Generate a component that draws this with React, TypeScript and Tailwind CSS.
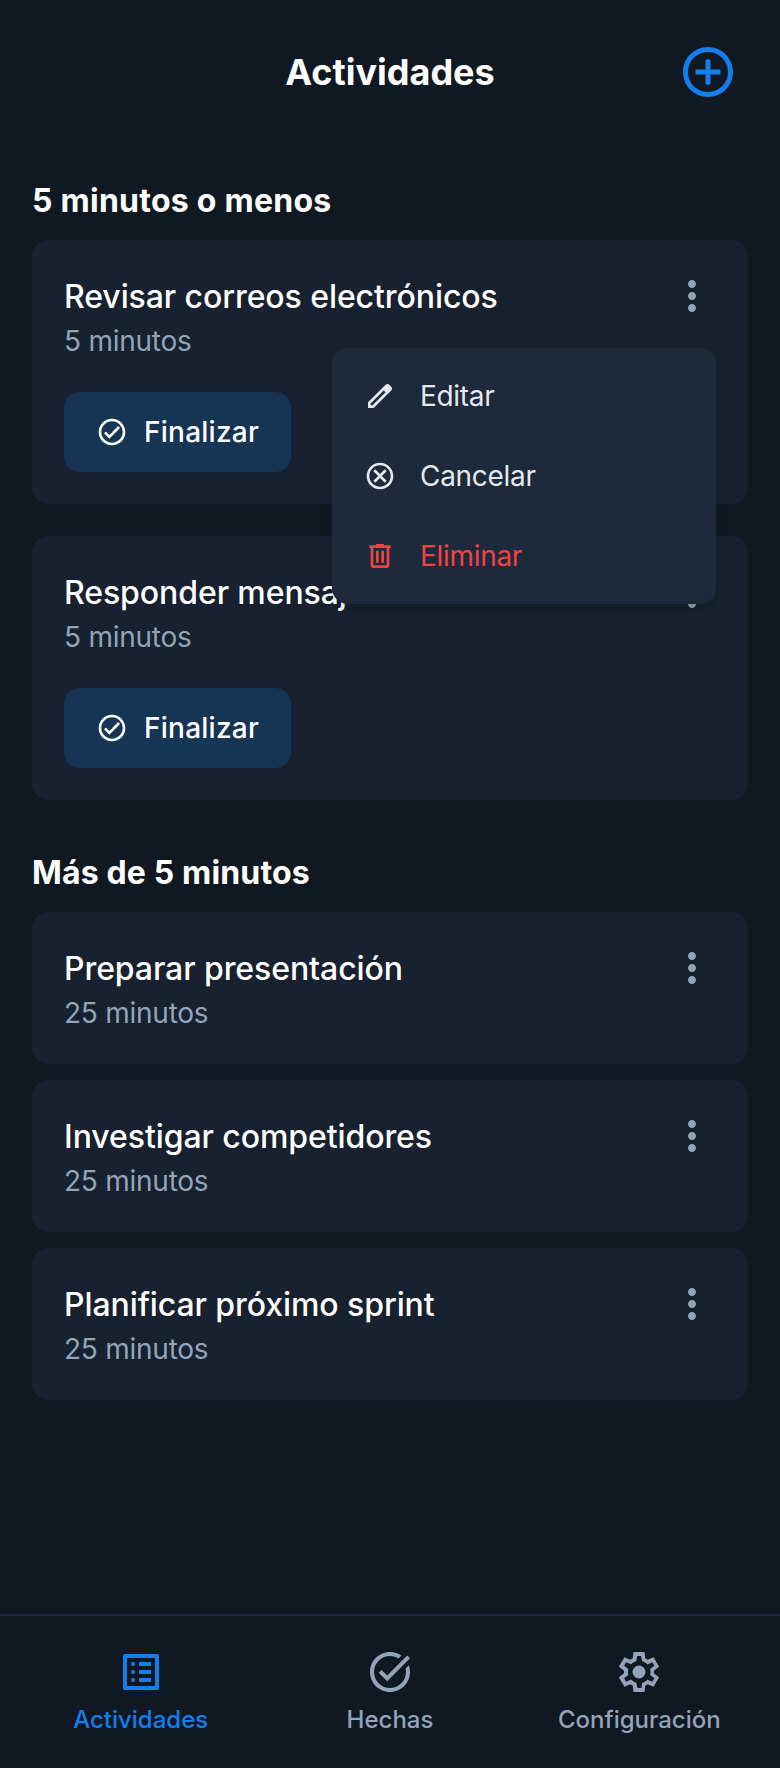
import React from "react";

const P = {
  add: "M13 7h-2v4H7v2h4v4h2v-4h4v-2h-4V7zm-1-5C6.48 2 2 6.48 2 12s4.48 10 10 10 10-4.48 10-10S17.52 2 12 2zm0 18c-4.41 0-8-3.59-8-8s3.59-8 8-8 8 3.59 8 8-3.59 8-8 8z",
  more: "M12 8c1.1 0 2-.9 2-2s-.9-2-2-2-2 .9-2 2 .9 2 2 2zm0 2c-1.1 0-2 .9-2 2s.9 2 2 2 2-.9 2-2-.9-2-2-2zm0 6c-1.1 0-2 .9-2 2s.9 2 2 2 2-.9 2-2-.9-2-2-2z",
  check: "M12 2C6.48 2 2 6.48 2 12s4.48 10 10 10 10-4.48 10-10S17.52 2 12 2zm0 18c-4.41 0-8-3.59-8-8s3.59-8 8-8 8 3.59 8 8-3.59 8-8 8zm4.59-12.42L10 14.17l-2.59-2.58L6 13l4 4 8-8z",
  edit: "M5 19h1.425L16.2 9.225 14.775 7.8 5 17.575V19Zm-2 2v-4.25L16.2 3.575q.3-.275.663-.425.362-.15.762-.15t.775.15q.375.15.65.45L20.425 5q.3.275.438.65.137.375.137.75 0 .4-.137.763-.138.362-.438.662L7.25 21H3Z",
  cancel: "M12 2C6.47 2 2 6.47 2 12s4.47 10 10 10 10-4.47 10-10S17.53 2 12 2zm0 18c-4.41 0-8-3.59-8-8s3.59-8 8-8 8 3.59 8 8-3.59 8-8 8zm3.59-13L12 10.59 8.41 7 7 8.41 10.59 12 7 15.59 8.41 17 12 13.41 15.59 17 17 15.59 13.41 12 17 8.41z",
  trash: "M7 21q-.825 0-1.413-.588T5 19V6H4V4h5V3h6v1h5v2h-1v13q0 .825-.588 1.413T17 21H7ZM17 6H7v13h10V6ZM9 17h2V8H9v9Zm4 0h2V8h-2v9Z",
  list: "M19 5v14H5V5h14M20 3H4a1 1 0 0 0-1 1v16a1 1 0 0 0 1 1h16a1 1 0 0 0 1-1V4a1 1 0 0 0-1-1ZM11 7h6v2h-6V7Zm0 4h6v2h-6v-2Zm0 4h6v2h-6v-2ZM8 7a1 1 0 1 1 0 2 1 1 0 0 1 0-2Zm0 4a1 1 0 1 1 0 2 1 1 0 0 1 0-2Zm0 4a1 1 0 1 1 0 2 1 1 0 0 1 0-2Z",
  task: "M22 5.18L10.59 16.6l-4.24-4.24 1.41-1.41 2.83 2.83 10-10L22 5.18zm-2.21 5.04c.13.57.21 1.17.21 1.78 0 4.42-3.58 8-8 8s-8-3.58-8-8 3.58-8 8-8c1.58 0 3.04.46 4.28 1.25l1.44-1.44C16.1 2.67 14.13 2 12 2 6.48 2 2 6.48 2 12s4.48 10 10 10 10-4.48 10-10c0-1.19-.22-2.33-.6-3.39l-1.61 1.61z",
  gear: "m9.25 22-.4-3.2q-.325-.125-.612-.3-.288-.175-.563-.375L4.7 19.375l-2.75-4.75 2.575-1.95Q4.5 12.5 4.5 12.337v-.675q0-.162.025-.337L1.95 9.375l2.75-4.75 2.975 1.25q.275-.2.575-.375.3-.175.6-.3l.4-3.2h5.5l.4 3.2q.325.125.613.3.287.175.562.375l2.975-1.25 2.75 4.75-2.575 1.95q.025.175.025.337v.675q0 .163-.05.338l2.575 1.95-2.75 4.75-2.95-1.25q-.275.2-.575.375-.3.175-.6.3l-.4 3.2Zm2-2h1.975l.35-2.65q.775-.2 1.438-.588.662-.387 1.212-.937l2.475 1.025.975-1.7-2.15-1.625q.125-.35.175-.738.05-.387.05-.787t-.05-.788q-.05-.387-.175-.737l2.15-1.625-.975-1.7-2.475 1.05q-.55-.575-1.212-.963-.663-.387-1.438-.587L13 4h-1.975l-.35 2.65q-.775.2-1.437.587-.663.388-1.213.938L5.55 7.15l-.975 1.7 2.15 1.6q-.125.375-.175.75-.05.375-.05.8 0 .4.05.775t.175.75l-2.15 1.625.975 1.7 2.475-1.05q.55.575 1.213.963.662.387 1.437.587Z",
  gearDot: "M12 8.750a3.25 3.25 0 1 0 0 6.5 3.25 3.25 0 0 0 0-6.5Z",
};

function Icon({ d, className }: { d: string; className: string }) {
  return (
    <svg viewBox="0 0 24 24" fill="currentColor" className={className}>
      <path d={d} />
    </svg>
  );
}

function Card({ title, time, finish, gapTop }: { title: string; time: string; finish?: boolean; gapTop?: string }) {
  return (
    <div className={`bg-[#17212f] rounded-2xl px-8 pt-[33px] pb-[31px] ${gapTop ?? ""}`}>
      <div className="flex justify-between">
        <div>
          <div className="text-[32px] leading-[48px] font-medium tracking-[-0.08px] text-white">{title}</div>
          <div className="text-[28px] leading-[40px] tracking-[-0.25px] text-[#94a3b8]">{time}</div>
        </div>
        <Icon d={P.more} className="w-[48px] h-[48px] -mt-px text-[#94a3b8]" />
      </div>
      {finish && (
        <button className="mt-[31px] mb-px h-[80px] px-8 rounded-2xl bg-[#163454] text-white flex items-center gap-4">
          <Icon d={P.check} className="w-[32px] h-[32px]" />
          <span className="text-[28px] font-medium tracking-[0.25px]">Finalizar</span>
        </button>
      )}
    </div>
  );
}

function MenuItem({ d, label, color }: { d: string; label: string; color: string }) {
  return (
    <div className={`h-[80px] flex items-center px-8 gap-6 ${color}`}>
      <Icon d={d} className="w-[32px] h-[32px]" />
      <span className="text-[28px] tracking-[-0.3px]">{label}</span>
    </div>
  );
}

function Tab({ d, label, color, extra }: { d: string; label: string; color: string; extra?: string }) {
  return (
    <div className={`flex-1 flex flex-col items-center ${color}`}>
      <div className="relative w-[48px] h-[48px]">
        <Icon d={d} className="w-[48px] h-[48px]" />
        {extra && <Icon d={extra} className="absolute inset-0 w-[48px] h-[48px]" />}
      </div>
      <span className="text-[24px] leading-[32px] font-medium mt-2">{label}</span>
    </div>
  );
}

export default function App() {
  return (
    <div className="w-[780px] h-[1768px] bg-[#101922] flex flex-col font-['Inter',sans-serif]">
      <header className="relative h-[144px] flex items-center justify-center">
        <h1 className="text-[36px] font-bold text-white">Actividades</h1>
        <Icon d={P.add} className="absolute right-[42px] top-[42px] w-[60px] h-[60px] text-[#137fec]" />
      </header>
      <main className="flex-1 px-8 relative">
        <h2 className="text-[32px] leading-[40px] font-bold tracking-[0.25px] text-white mt-[37px] mb-[19px]">5 minutos o menos</h2>
        <Card title="Revisar correos electrónicos" time="5 minutos" finish />
        <Card title="Responder mensajes" time="5 minutos" finish gapTop="mt-8" />
        <h2 className="text-[32px] leading-[40px] font-bold tracking-[0.15px] text-white mt-[53px] mb-[19px]">Más de 5 minutos</h2>
        <Card title="Preparar presentación" time="25 minutos" />
        <Card title="Investigar competidores" time="25 minutos" gapTop="mt-4" />
        <Card title="Planificar próximo sprint" time="25 minutos" gapTop="mt-4" />
        <div className="absolute left-[332px] top-[204px] w-[384px] bg-[#1e293b] rounded-2xl py-2 shadow-lg">
          <MenuItem d={P.edit} label="Editar" color="text-[#e2e8f0]" />
          <MenuItem d={P.cancel} label="Cancelar" color="text-[#e2e8f0]" />
          <MenuItem d={P.trash} label="Eliminar" color="text-[#ef4444]" />
        </div>
      </main>
      <nav className="h-[154px] border-t-2 border-[#1e293b] flex px-4 pt-[32px]">
        <Tab d={P.list} label="Actividades" color="text-[#137fec]" />
        <Tab d={P.task} label="Hechas" color="text-[#94a3b8]" />
        <Tab d={P.gear} extra={P.gearDot} label="Configuración" color="text-[#94a3b8]" />
      </nav>
    </div>
  );
}
